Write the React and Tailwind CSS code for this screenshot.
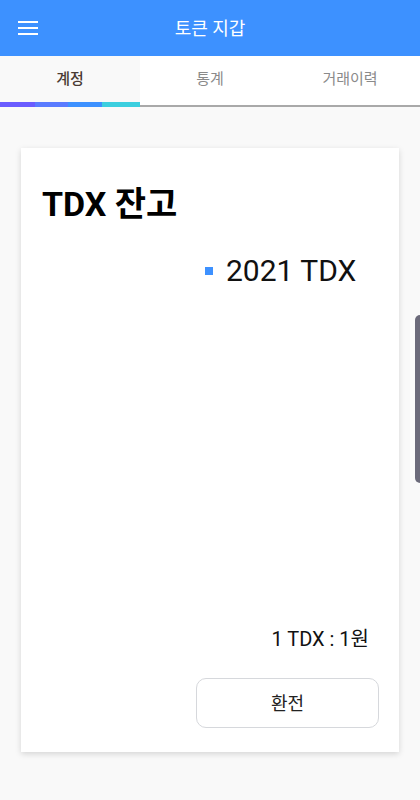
import React from "react";

const tabs = ["계정", "통계", "거래이력"];

const App = () => {
  return (
    <div
      className="w-[420px] h-[800px] bg-[#f9f9f9] flex flex-col overflow-hidden relative"
      style={{ fontFamily: "Roboto, 'Noto Sans CJK KR', sans-serif" }}
    >
      {/* header */}
      <div className="h-14 bg-[#3d91ff] flex items-center relative shrink-0">
        <button className="ml-[18px] w-5 flex flex-col gap-1">
          <span className="block h-[2px] w-5 bg-white"></span>
          <span className="block h-[2px] w-5 bg-white"></span>
          <span className="block h-[2px] w-5 bg-white"></span>
        </button>
        <div className="absolute left-0 right-0 text-center text-white text-[18px] pointer-events-none">
          토큰 지갑
        </div>
      </div>

      {/* tabs */}
      <div className="flex h-[51px] shrink-0">
        {tabs.map((t, i) => (
          <div
            key={t}
            className={`flex-1 flex flex-col ${i === 0 ? "bg-[#f9f9f9]" : "bg-white"}`}
          >
            <div
              className={`flex-1 flex items-center justify-center text-[15px] ${
                i === 0 ? "text-[#4a3b33] font-medium" : "text-[#8a8a8a]"
              }`}
            >
              {t}
            </div>
            {i === 0 ? (
              <div className="flex h-[5px]">
                <div className="w-[35px] bg-[#6a5cff]"></div>
                <div className="w-[33px] bg-[#5a7bff]"></div>
                <div className="w-[34px] bg-[#3d91ff]"></div>
                <div className="flex-1 bg-[#3ccfdf]"></div>
              </div>
            ) : (
              <div className="h-[5px] flex flex-col justify-end">
                <div className="h-[2px] bg-[#a9a9a9]"></div>
              </div>
            )}
          </div>
        ))}
      </div>

      {/* card */}
      <div className="px-[21px] pt-[41px]">
        <div className="bg-white h-[604px] shadow-[0_2px_6px_rgba(0,0,0,0.15)] flex flex-col px-[21px]">
          <div className="pt-[36px] text-[34px] font-bold text-black leading-[40px]">
            TDX 잔고
          </div>
          <div className="mt-[29px] flex items-center pl-[163px]">
            <span className="w-[8px] h-[8px] bg-[#3d91ff] mr-[13px]"></span>
            <span className="text-[30px] text-[#111] leading-[36px]">2021 TDX</span>
          </div>
          <div className="flex-1"></div>
          <div className="text-right pr-[9px] text-[20px] text-[#111] leading-7">
            1 TDX : 1원
          </div>
          <div className="flex justify-end mt-[25px] mb-[24px]">
            <button className="w-[183px] h-[50px] border border-[#d6d8dc] rounded-[10px] text-[18px] text-[#222] mr-[-1px]">
              환전
            </button>
          </div>
        </div>
      </div>

      {/* scrollbar */}
      <div className="absolute right-0 top-[315px] w-[5px] h-[168px] bg-[#6b6a7a] rounded-l-full"></div>
    </div>
  );
};

export default App;
